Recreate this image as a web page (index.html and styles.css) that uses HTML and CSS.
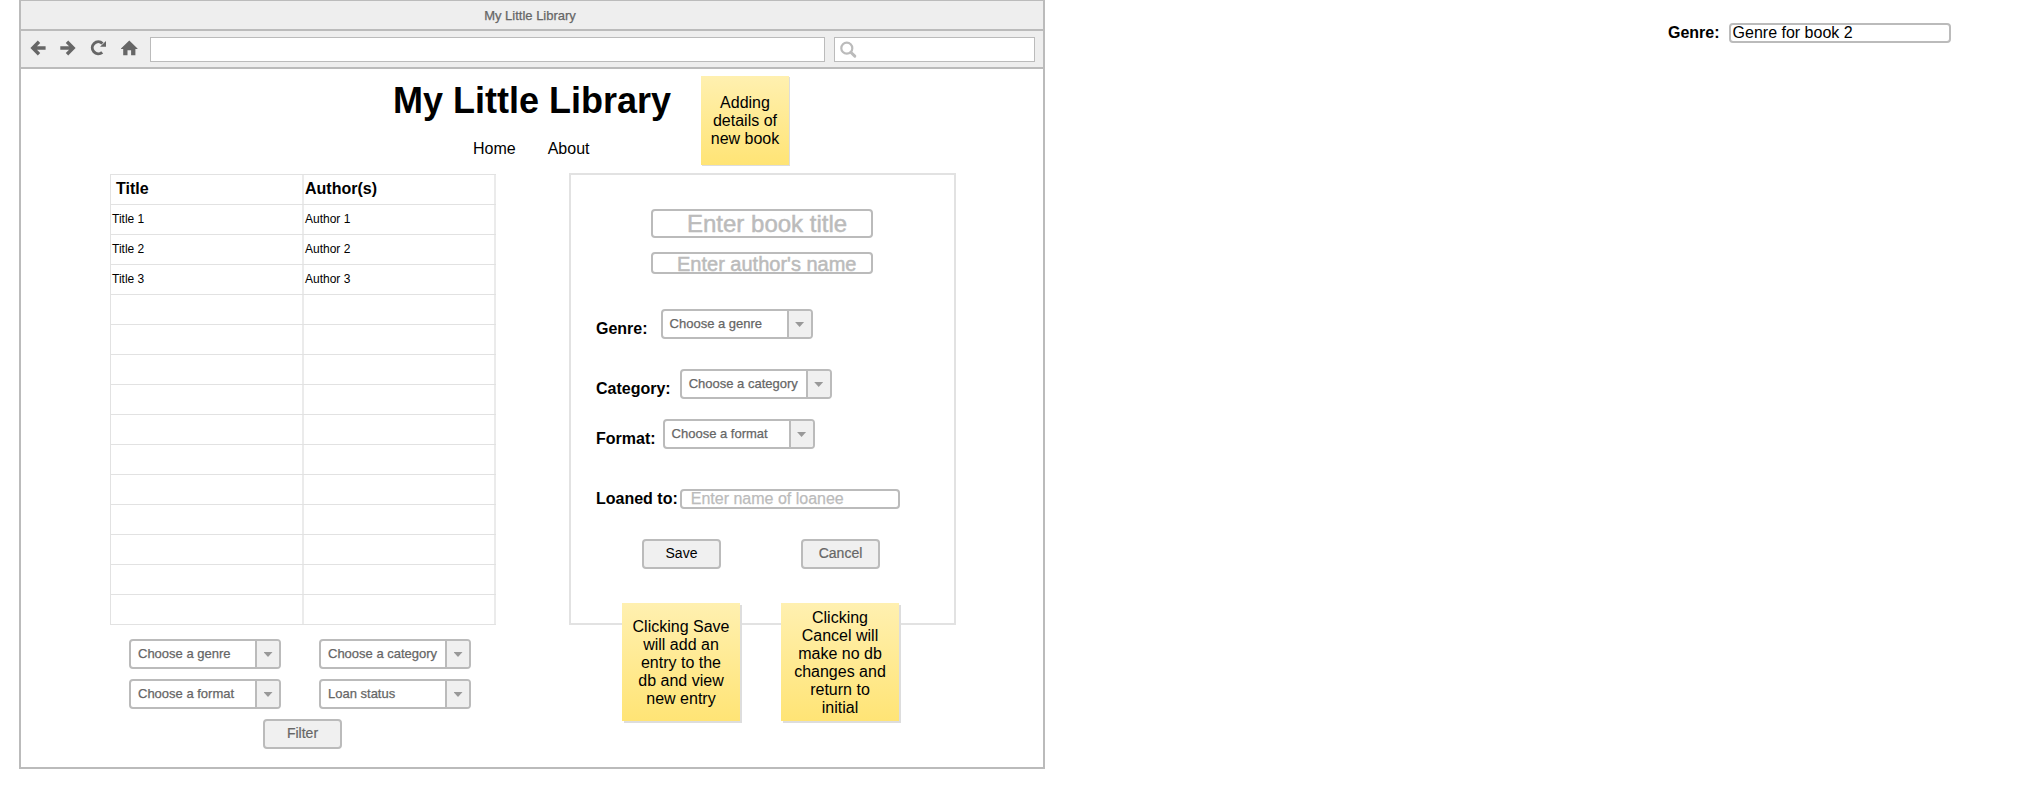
FILE: index.html
```
<!DOCTYPE html>
<html lang="en">
<head>
<meta charset="utf-8">
<title>My Little Library</title>
<link rel="stylesheet" href="styles.css">
</head>
<body>
<div class="canvas">
  <div class="window">
    <div class="titlebar">My Little Library</div>
    <div class="toolbar">
      <svg class="nav-icons" width="120" height="36" viewBox="0 0 120 36">
        <g fill="none" stroke="#666" stroke-width="3.4">
          <path d="M24.600 17H12.500M18 10.700L11.800 17l6.200 6.300"/>
          <path d="M39.300 17h12.200M46 10.700l6.200 6.300-6.200 6.300"/>
          <path d="M81.200 21.360A6 6 0 1 1 81.500 12.500" stroke-width="3"/>
        </g>
        <path d="M85 10v5.700h-6z" fill="#666"/>
        <path d="M108.300 9.500L116.500 17.500V18h-2.100v6.300h-4.300v-5.100h-3.600v5.100h-4.300V18H100v-.5z" fill="#666"/>
      </svg>
      <div class="url"></div>
      <div class="search">
        <svg width="18" height="18" viewBox="0 0 18 18"><g fill="none" stroke="#bbb"><circle cx="6.800" cy="7.200" r="5.500" stroke-width="2.200"/><path d="M11 11.500l3.800 3.600" stroke-width="3" stroke-linecap="round"/></g></svg>
      </div>
    </div>
    <div class="page">
      <div class="head">
        <h1>My Little Library</h1>
        <div class="links"><span>Home</span><span>About</span></div>
        <div class="note note-top">Adding<br>details of<br>new book</div>
      </div>
      <div class="columns">
        <div class="left">
          <div class="table">
            <div class="row header"><span>Title</span><span>Author(s)</span></div>
            <div class="row"><span>Title 1</span><span>Author 1</span></div>
            <div class="row"><span>Title 2</span><span>Author 2</span></div>
            <div class="row"><span>Title 3</span><span>Author 3</span></div>
            <div class="row"><span></span><span></span></div>
            <div class="row"><span></span><span></span></div>
            <div class="row"><span></span><span></span></div>
            <div class="row"><span></span><span></span></div>
            <div class="row"><span></span><span></span></div>
            <div class="row"><span></span><span></span></div>
            <div class="row"><span></span><span></span></div>
            <div class="row"><span></span><span></span></div>
            <div class="row"><span></span><span></span></div>
            <div class="row"><span></span><span></span></div>
            <div class="row"><span></span><span></span></div>
          </div>
          <div class="filters">
            <div class="select"><span>Choose a genre</span><i></i></div>
            <div class="select"><span>Choose a category</span><i></i></div>
            <div class="select"><span>Choose a format</span><i></i></div>
            <div class="select"><span>Loan status</span><i></i></div>
          </div>
          <div class="button filter">Filter</div>
        </div>
        <div class="panel">
          <div class="input title-input">Enter book title</div>
          <div class="input author-input">Enter author's name</div>
          <div class="field genre"><b>Genre:</b><div class="select"><span>Choose a genre</span><i></i></div></div>
          <div class="field category"><b>Category:</b><div class="select"><span>Choose a category</span><i></i></div></div>
          <div class="field format"><b>Format:</b><div class="select"><span>Choose a format</span><i></i></div></div>
          <div class="field loan"><b>Loaned to:</b><div class="input loan-input">Enter name of loanee</div></div>
          <div class="actions"><div class="button save">Save</div><div class="button">Cancel</div></div>
          <div class="note note-save">Clicking Save<br>will add an<br>entry to the<br>db and view<br>new entry</div>
          <div class="note note-cancel">Clicking<br>Cancel will<br>make no db<br>changes and<br>return to<br>initial</div>
        </div>
      </div>
    </div>
  </div>
  <div class="aside"><b>Genre:</b><div class="input">Genre for book 2</div></div>
</div>
</body>
</html>
```
FILE: styles.css
```
* { box-sizing: border-box; }
body { margin: 0; background: #fff; color: #000; font: 16px/18px "Liberation Sans", Arial, sans-serif; white-space: nowrap; }
.canvas { display: flex; align-items: flex-start; height: 788px; overflow: hidden; }
.window { flex: none; width: 1026px; height: 770px; margin: -1px 0 0 19px; border: 2px solid #bbb; }
.titlebar { height: 30px; padding-right: 4px; border-bottom: 2px solid #bbb; background: #eee; color: #666; font-size: 13px; line-height: 29px; text-align: center; -webkit-text-stroke: 0.25px #666; }
.toolbar { display: flex; align-items: center; height: 38px; padding-right: 8px; border-bottom: 2px solid #bbb; background: #eee; }
.nav-icons { flex: none; margin-right: 9px; }
.url, .search { height: 25px; border: 1px solid #bbb; background: #fff; }
.url { width: 675px; margin-right: 9px; }
.search { width: 201px; padding: 3px 5px; }
.search svg { display: block; }

.head { position: relative; height: 104px; padding-top: 11px; }
h1 { margin: 0 0 0 372px; font-size: 36px; line-height: 42px; font-weight: bold; }
.links { display: flex; gap: 32px; margin: 18px 0 0 452px; }

.note { position: absolute; display: flex; align-items: center; justify-content: center; width: 118px; height: 118px; padding-top: 1px; background: linear-gradient(#fff0b0, #ffe475); box-shadow: 2px 2px 0 #ddd; text-align: center; }
.note-top { left: 680px; top: 7px; width: 88px; height: 89px; box-shadow: 1px 1px 0 #ddd; }

.columns { display: flex; align-items: flex-start; }
.left { width: 386px; margin: 1px 73px 0 89px; }
.table { border-top: 1px solid #e2e2e2; border-left: 1px solid #e2e2e2; }
.row { display: grid; grid-template-columns: 193px 192px; height: 30px; border-bottom: 1px solid #e2e2e2; font-size: 12px; line-height: 29px; }
.row span { padding-left: 1px; border-right: 2px solid #ebebeb; }
.row.header { font-size: 16px; font-weight: bold; line-height: 28px; }
.row.header span:first-child { padding-left: 5px; }

.select { display: flex; width: 152px; height: 30px; border: 2px solid #bbb; border-radius: 4px; background: #fff; color: #666; font-size: 13px; line-height: 25px; -webkit-text-stroke: 0.25px #666; overflow: hidden; }
.select span { flex: 1; padding-left: 7px; }
.select i { width: 24px; border-left: 2px solid #bbb; background: #f0f0f0; display: flex; align-items: center; justify-content: center; padding-top: 1px; }
.select i::before { content: ""; width: 9px; height: 5px; background: #999; clip-path: polygon(0 0, 100% 0, 50% 100%); }
.filters { display: grid; grid-template-columns: 152px 152px; gap: 10px 38px; margin: 14px 0 10px 19px; }
.button { width: 79px; height: 30px; border: 2px solid #bbb; border-radius: 4px; background: #f0f0f0; color: #666; font-size: 14px; line-height: 25px; text-align: center; -webkit-text-stroke: 0.2px #666; }
.filter { margin-left: 153px; }
.save { color: #000; -webkit-text-stroke: 0; }

.panel { position: relative; width: 387px; height: 452px; padding: 34px 0 0 25px; border: 2px solid #e2e2e2; }
.input { width: 222px; height: 20px; border: 2px solid #bbb; border-radius: 4px; background: #fff; color: #bbb; line-height: 16px; }
.panel .input { -webkit-text-stroke: 0.5px #bbb; }
.title-input { height: 29px; margin-left: 55px; padding-left: 34px; font-size: 24px; line-height: 25px; }
.author-input { height: 22px; margin: 14px 0 35px 55px; padding-left: 24px; font-size: 20px; line-height: 21px; }
.field { display: flex; height: 30px; }
.field b { padding-top: 11px; }
.genre { gap: 13px; margin-bottom: 30px; }
.category { gap: 9px; margin-bottom: 20px; }
.format { gap: 7px; margin-bottom: 30px; }
.loan { gap: 2px; }
.panel .loan-input { width: 220px; margin-top: 10px; padding-left: 9px; -webkit-text-stroke-width: 0.25px; }
.actions { display: flex; gap: 80px; margin: 30px 0 0 46px; }
.note-save { left: 51px; top: 428px; padding-top: 2px; }
.note-cancel { left: 210px; top: 428px; padding-top: 2px; }

.aside { display: flex; gap: 9px; margin: 23px 0 0 623px; }
.aside b { padding-top: 1px; }
.aside .input { padding-left: 2px; color: #000; }
```
